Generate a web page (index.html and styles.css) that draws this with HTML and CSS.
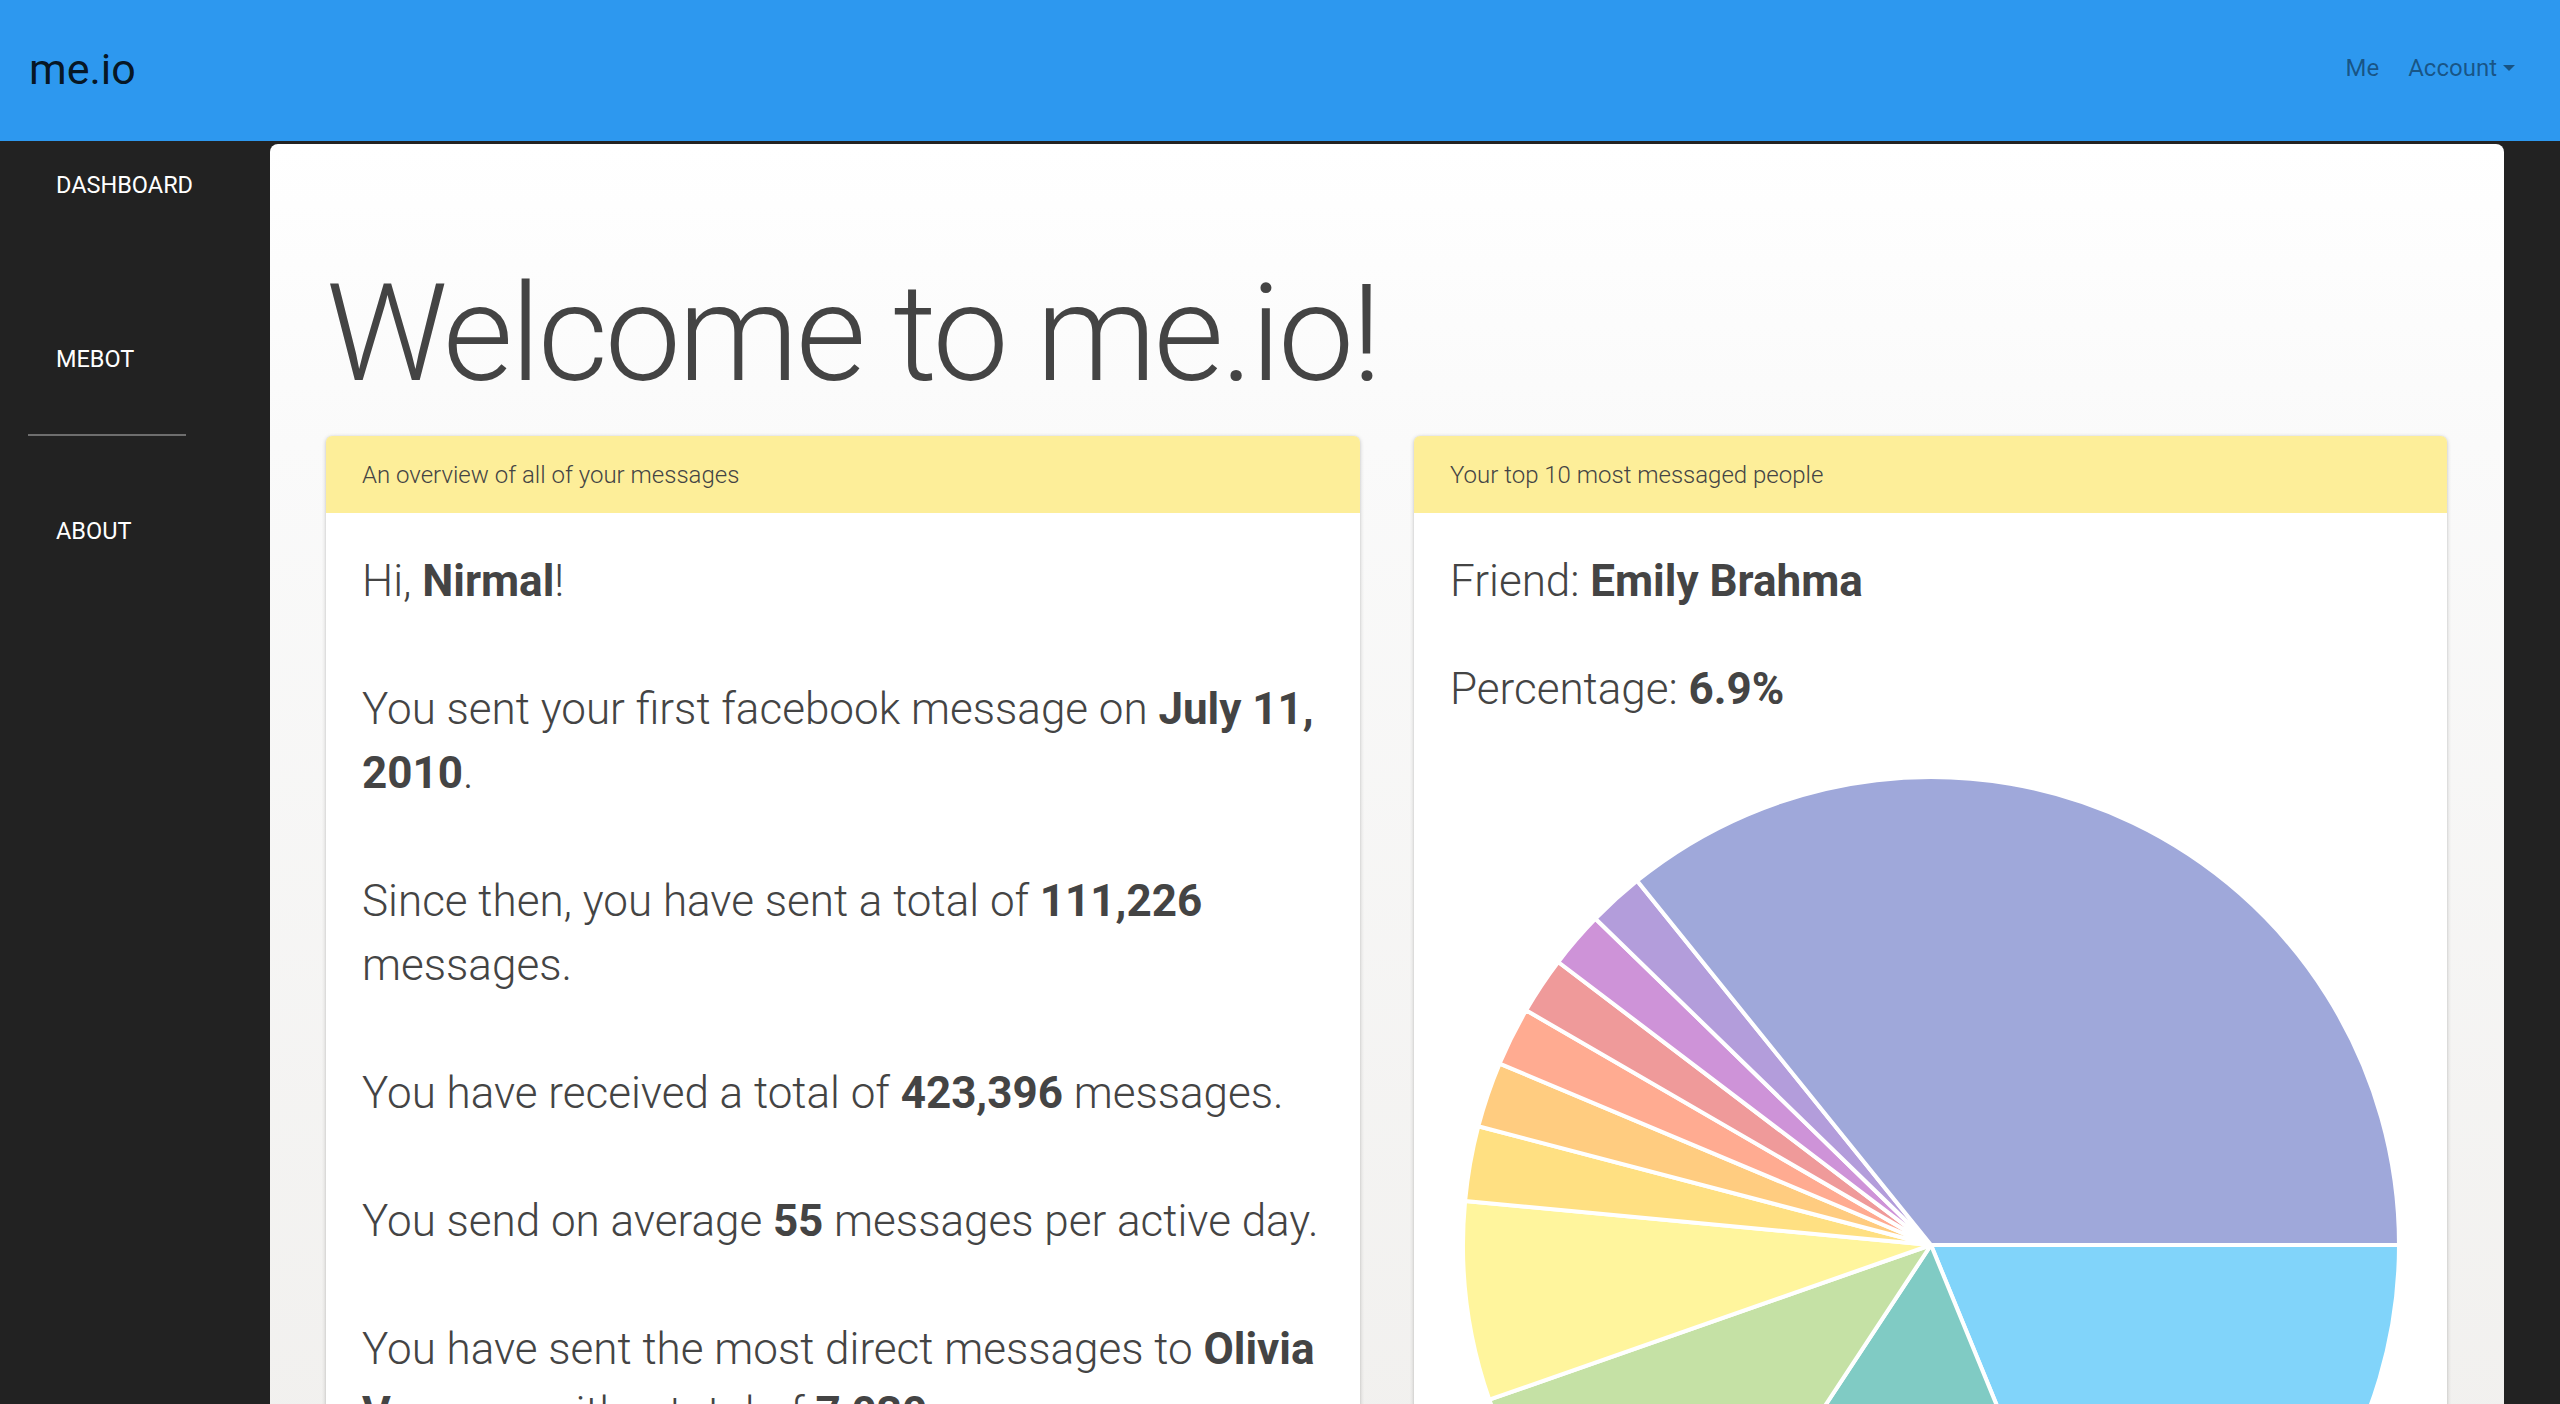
FILE: index.html
```html
<!DOCTYPE html>
<html lang="en">
<head>
<meta charset="utf-8">
<title>me.io</title>
<link rel="stylesheet" href="styles.css">
</head>
<body>
<header class="navbar">
  <a class="brand" href="#">me.io</a>
  <nav class="nav-right">
    <a class="nav-link" href="#">Me</a>
    <a class="nav-link dropdown" href="#">Account<span class="caret"></span></a>
  </nav>
</header>
<div class="layout">
  <aside class="sidebar">
    <a class="side-link side-dashboard" href="#">Dashboard</a>
    <a class="side-link side-mebot" href="#">Mebot</a>
    <hr class="side-divider">
    <a class="side-link side-about" href="#">About</a>
  </aside>
  <main class="main">
    <h1 class="title">Welcome to me.io!</h1>
    <div class="cards">
      <section class="card">
        <div class="card-header">An overview of all of your messages</div>
        <div class="card-body">
          <p>Hi, <b>Nirmal</b>!</p>
          <p>You sent your first facebook message on <b>July 11, 2010</b>.</p>
          <p>Since then, you have sent a total of <b>111,226</b> messages.</p>
          <p>You have received a total of <b>423,396</b> messages.</p>
          <p>You send on average <b>55</b> messages per active day.</p>
          <p>You have sent the most direct messages to <b>Olivia Vasquez</b> with a total of <b>7,030</b> messages.</p>
        </div>
      </section>
      <section class="card">
        <div class="card-header">Your top 10 most messaged people</div>
        <div class="card-body">
          <p class="friend">Friend: <b>Emily Brahma</b></p>
          <p class="percent">Percentage: <b>6.9%</b></p>
          <svg class="pie" width="960" height="960" viewBox="0 0 960 960">
            <g stroke="#fff" stroke-width="4" stroke-linejoin="round">
              <path fill="#81d4fa" d="M480,480 L948,480 A468,468 0 0 1 657.6,913 Z"/>
              <path fill="#80cbc4" d="M480,480 L657.6,913 A468,468 0 0 1 222.4,870.7 Z"/>
              <path fill="#c5e1a5" d="M480,480 L222.4,870.7 A468,468 0 0 1 38.3,634.7 Z"/>
              <path fill="#fff59d" d="M480,480 L38.3,634.7 A468,468 0 0 1 14.1,436 Z"/>
              <path fill="#ffe082" d="M480,480 L14.1,436 A468,468 0 0 1 27.3,361.2 Z"/>
              <path fill="#ffcc80" d="M480,480 L27.3,361.2 A468,468 0 0 1 48.6,298.6 Z"/>
              <path fill="#ffab91" d="M480,480 L48.6,298.6 A468,468 0 0 1 75.1,245.3 Z"/>
              <path fill="#ef9a9a" d="M480,480 L75.1,245.3 A468,468 0 0 1 107.2,197 Z"/>
              <path fill="#ce93d8" d="M480,480 L107.2,197 A468,468 0 0 1 144.5,153.7 Z"/>
              <path fill="#b39ddb" d="M480,480 L144.5,153.7 A468,468 0 0 1 186.1,115.8 Z"/>
              <path fill="#9fa8da" d="M480,480 L186.1,115.8 A468,468 0 0 1 948,480 Z"/>
            </g>
          </svg>
        </div>
      </section>
    </div>
  </main>
</div>
</body>
</html>
```

FILE: styles.css
```css
html, body {
  margin: 0;
  padding: 0;
}

body {
  background: #222222;
  font-family: Roboto, "Liberation Sans", Arial, sans-serif;
  color: #444444;
  overflow: hidden;
}

a {
  text-decoration: none;
}

.navbar {
  height: 141px;
  background: #2d98ef;
  display: flex;
  align-items: center;
  justify-content: space-between;
  padding: 0 45px 0 29px;
  box-sizing: border-box;
}

.brand {
  font-size: 43px;
  font-weight: 400;
  color: rgba(0, 0, 0, 0.87);
  margin-top: -4px;
}

.nav-right {
  display: flex;
  align-items: center;
  gap: 29px;
  margin-top: -5px;
}

.nav-link {
  font-size: 24px;
  color: rgba(0, 0, 0, 0.45);
  display: flex;
  align-items: center;
}

.caret {
  display: inline-block;
  width: 0;
  height: 0;
  border-top: 6px solid rgba(0, 0, 0, 0.45);
  border-left: 6px solid transparent;
  border-right: 6px solid transparent;
  margin-left: 6px;
}

.layout {
  display: grid;
  grid-template-columns: 270px 2234px 1fr;
  align-items: start;
}

.sidebar {
  display: flex;
  flex-direction: column;
  padding-top: 27px;
}

.side-link {
  color: #ffffff;
  font-size: 23.5px;
  line-height: 34px;
  text-transform: uppercase;
  padding-left: 56px;
}

.side-mebot {
  margin-top: 140px;
}

.side-divider {
  border: 0;
  height: 2px;
  background: #6e6e6e;
  width: 158px;
  margin: 58px 0 0 28px;
}

.side-about {
  margin-top: 78px;
}

.main {
  margin-top: 3px;
  border-radius: 8px 8px 0 0;
  background: linear-gradient(to bottom, #ffffff 0, #fafafa 300px, #f1f0ee 1300px);
  padding: 115px 57px 0 56px;
  min-height: 1400px;
  box-sizing: border-box;
}

.title {
  margin: 0 0 27px 0;
  font-size: 136px;
  line-height: 150px;
  font-weight: 300;
  color: #444444;
  letter-spacing: -3px;
}

.cards {
  display: grid;
  grid-template-columns: 1034px 1033px;
  column-gap: 54px;
  align-items: start;
}

.card {
  background: #ffffff;
  border-radius: 6px;
  box-shadow: 0 1px 4px rgba(0, 0, 0, 0.22), 0 0 1px rgba(0, 0, 0, 0.15);
  overflow: hidden;
}

.card-header {
  background: #fdee99;
  font-size: 24px;
  line-height: 33px;
  font-weight: 300;
  color: #444444;
  padding: 22.5px 36px 21.5px 36px;
}

.card-body {
  padding: 36px 36px 40px 36px;
}

.card-body p {
  margin: 0 0 64px 0;
  font-size: 44px;
  line-height: 64px;
  font-weight: 300;
}

.card-body b {
  font-weight: 700;
}

.card-body p.friend {
  margin-bottom: 44px;
}

.card-body p.percent {
  margin-bottom: 44px;
}

.pie {
  display: block;
  margin: 0 auto;
}
```
